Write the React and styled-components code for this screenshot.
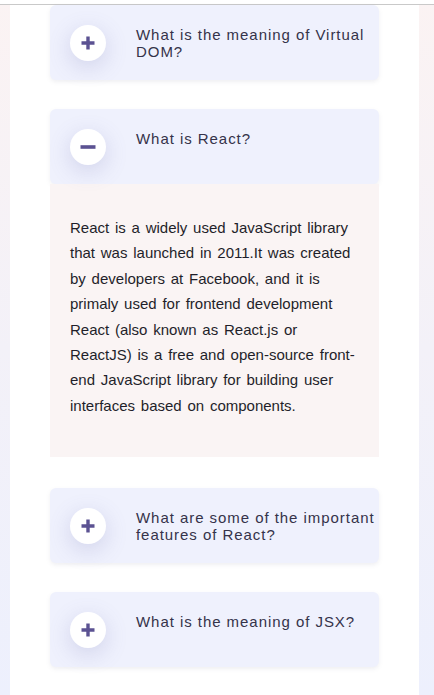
import React, { useState } from "react";
import styled, { createGlobalStyle } from "styled-components";

const Global = createGlobalStyle`
  html, body { margin: 0; padding: 0; }
  body {
    min-height: 695px;
    background: linear-gradient(180deg, #fbf3f3 0%, #f3f1f8 50%, #edf0fd 100%);
    font-family: "Liberation Sans", Arial, sans-serif;
    overflow: hidden;
  }
`;

const TopEdge = styled.div`
  height: 4px;
  background: #ffffff;
  border-bottom: 1px solid #c9c9c9;
`;

const Panel = styled.div`
  margin: 0 15px 0 10px;
  background: #ffffff;
  min-height: 690px;
  padding: 0 40px 0 40px;
  box-sizing: border-box;
`;

const List = styled.div`
  display: flex;
  flex-direction: column;
  width: 329px;
`;

const Item = styled.div`
  margin-bottom: ${(p) => (p.$open ? "31px" : "29px")};
`;

const Card = styled.div`
  display: flex;
  align-items: flex-start;
  height: 75px;
  box-sizing: border-box;
  padding: 20px 0 0 20px;
  background: #eff1fd;
  border-radius: 6px;
  box-shadow: 0 2px 4px rgba(120, 120, 150, 0.12);
  cursor: pointer;
`;

const IconCircle = styled.div`
  flex: none;
  width: 36px;
  height: 36px;
  border-radius: 50%;
  background: #ffffff;
  display: flex;
  align-items: center;
  justify-content: center;
  box-shadow: 0 6px 22px rgba(100, 100, 170, 0.22);
`;

const Question = styled.div`
  margin-left: 30px;
  padding-top: 1px;
  font-size: 15px;
  line-height: 17px;
  letter-spacing: 0.95px;
  color: #35334a;
`;

const Answer = styled.div`
  background: #faf4f4;
  padding: 31px 18px 39px 20px;
  font-size: 15px;
  line-height: 25.4px;
  word-spacing: 1.6px;
  color: #1f1f2a;
`;

const Plus = () => (
  <svg width="16" height="16" viewBox="0 0 16 16">
    <path d="M8 1.5v13M1.5 8h13" stroke="#5b5292" strokeWidth="3.4" strokeLinecap="butt" />
  </svg>
);

const Minus = () => (
  <svg width="16" height="16" viewBox="0 0 16 16">
    <path d="M0.5 8h15" stroke="#5b5292" strokeWidth="3.6" />
  </svg>
);

const items = [
  { q: "What is the meaning of Virtual DOM?", a: "" },
  {
    q: "What is React?",
    a: "React is a widely used JavaScript library that was launched in 2011.It was created by developers at Facebook, and it is primaly used for frontend development React (also known as React.js or ReactJS) is a free and open-source front-end JavaScript library for building user interfaces based on components.",
  },
  { q: "What are some of the important features of React?", a: "" },
  { q: "What is the meaning of JSX?", a: "" },
];

export default function App() {
  const [open, setOpen] = useState(1);
  return (
    <>
      <Global />
      <TopEdge />
      <Panel>
        <List>
          {items.map((it, i) => (
            <Item key={i} $open={open === i}>
              <Card onClick={() => setOpen(open === i ? -1 : i)}>
                <IconCircle>{open === i ? <Minus /> : <Plus />}</IconCircle>
                <Question>{it.q}</Question>
              </Card>
              {open === i && <Answer>{it.a}</Answer>}
            </Item>
          ))}
        </List>
      </Panel>
    </>
  );
}
